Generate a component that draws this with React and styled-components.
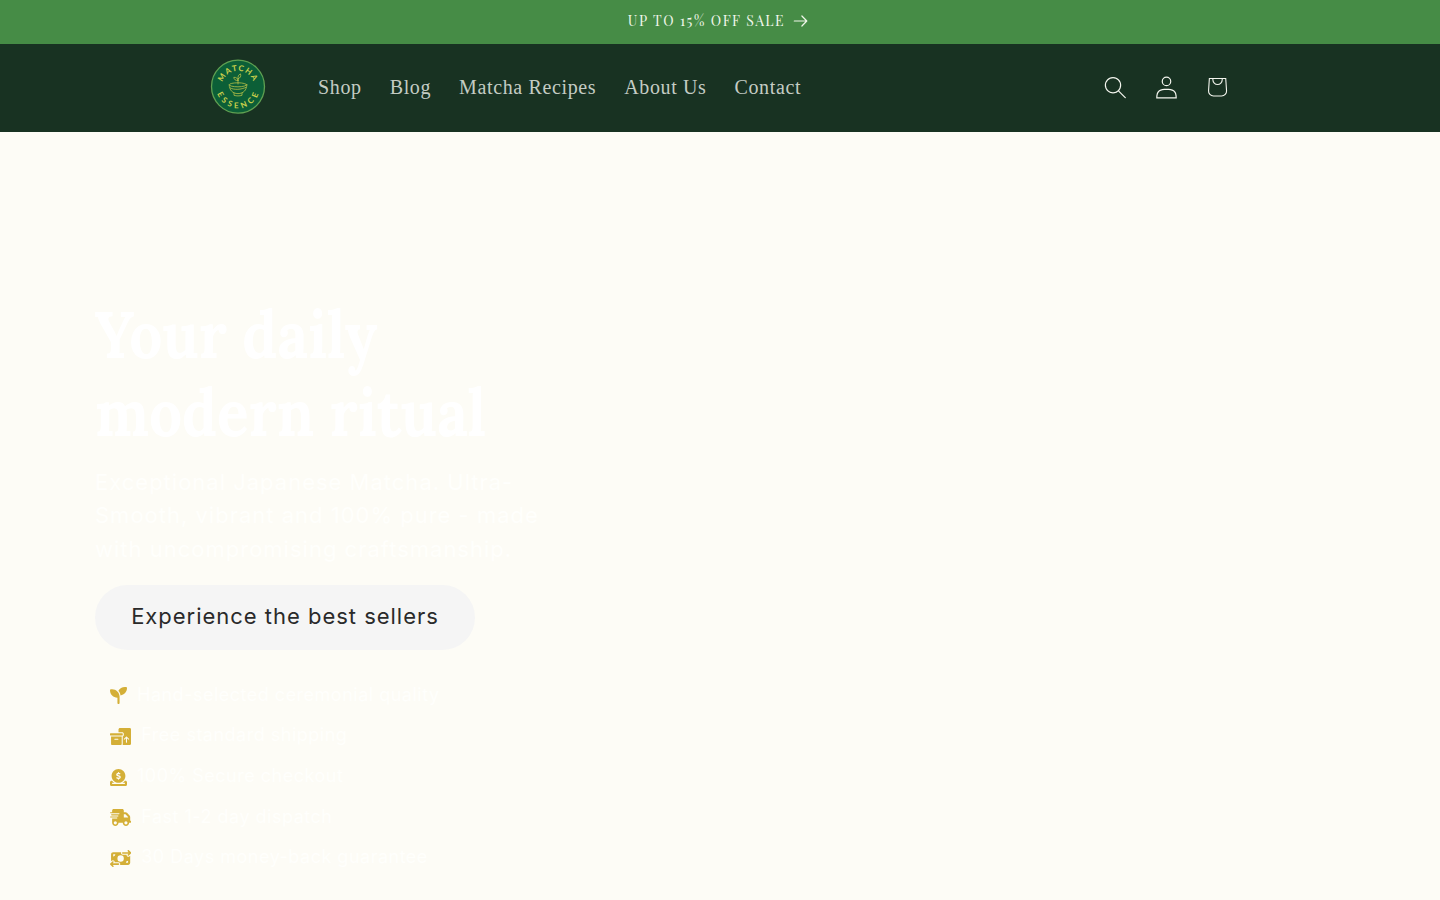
import React from 'react';
import styled, { createGlobalStyle } from 'styled-components';
import { FaSeedling, FaBoxesPacking, FaCircleDollarToSlot, FaTruckFast, FaMoneyBillTransfer } from 'react-icons/fa6';

const GlobalStyle = createGlobalStyle`
  *, *::before, *::after {
    box-sizing: border-box;
  }

  body {
    margin: 0;
    background: #fdfcf6;
    font-family: Inter, "Liberation Sans", sans-serif;
    overflow: hidden;
  }
`;

const Page = styled.div`
  height: 900px;
  overflow: hidden;
`;

const AnnouncementBar = styled.a`
  height: 44px;
  display: flex;
  align-items: center;
  justify-content: center;
  gap: 8px;
  padding-right: 4px;
  padding-bottom: 3px;
  background: #468c46;
  color: #f0f6ea;
  font-family: "Playfair Display", "Liberation Serif", serif;
  font-size: 14px;
  letter-spacing: 1.52px;
  text-decoration: none;
  white-space: nowrap;
`;

const HeaderBar = styled.header`
  height: 88px;
  background: #183222;
`;

const HeaderInner = styled.div`
  width: 1029px;
  height: 100%;
  margin-left: 210px;
  padding-bottom: 2px;
  display: flex;
  align-items: center;
`;

const LogoLink = styled.a`
  display: flex;
  width: 56px;
  height: 56px;
  margin-right: 38px;
`;

const Nav = styled.nav`
  display: flex;
  flex: 1;
`;

const NavLink = styled.a`
  padding: 12px 14px;
  color: #c4ccc4;
  font-family: "Liberation Serif", serif;
  font-size: 20px;
  line-height: 24px;
  letter-spacing: 0.63px;
  text-decoration: none;
  white-space: nowrap;
`;

const HeaderIcons = styled.div`
  display: flex;
  gap: 7px;
`;

const IconButton = styled.button`
  width: 44px;
  height: 44px;
  padding: 0;
  display: flex;
  align-items: center;
  justify-content: center;
  border: none;
  background: none;
  color: #f3f5ee;
  cursor: pointer;

  svg {
    flex: none;
  }
`;

const Hero = styled.section`
  padding: 164px 95px 0;
`;

const HeroTitle = styled.h1`
  width: max-content;
  margin: 0;
  color: #ffffff;
  font-family: Lora, "Noto Serif", "Liberation Serif", serif;
  font-size: 65px;
  font-weight: 700;
  line-height: 78px;
  white-space: nowrap;
  transform: scaleX(0.902);
  transform-origin: left;
`;

const HeroText = styled.p`
  margin: 14px 0 18.8px;
  color: #fffffc;
  font-size: 22px;
  line-height: 33.4px;
  letter-spacing: 1px;
  white-space: nowrap;
`;

const HeroButton = styled.a`
  width: 380px;
  height: 65px;
  display: flex;
  align-items: center;
  justify-content: center;
  padding-bottom: 3px;
  border-radius: 33px;
  background: #f5f5f5;
  color: #2a2a2a;
  font-size: 22px;
  letter-spacing: 0.98px;
  text-decoration: none;
  white-space: nowrap;
`;

const PerkList = styled.ul`
  margin: 24px 0 0;
  padding: 0 0 0 15px;
  list-style: none;
`;

const Perk = styled.li`
  height: 40.6px;
  display: flex;
  align-items: center;
  gap: 10px;
  color: #fffffc;
  font-size: 18px;
  letter-spacing: 0.5px;
  white-space: nowrap;

  svg {
    flex: none;
    width: ${({ $iconWidth }) => $iconWidth}px;
    height: 17px;
    margin-top: 3px;
    color: #d4af37;
  }
`;

const navItems = ['Shop', 'Blog', 'Matcha Recipes', 'About Us', 'Contact'];

const perks = [
  { icon: FaSeedling, iconWidth: 17, label: 'Hand-selected ceremonial quality' },
  { icon: FaBoxesPacking, iconWidth: 21.25, label: 'Free standard shipping' },
  { icon: FaCircleDollarToSlot, iconWidth: 17, label: '100% Secure checkout' },
  { icon: FaTruckFast, iconWidth: 21.25, label: 'Fast 1-2 day dispatch' },
  { icon: FaMoneyBillTransfer, iconWidth: 21.25, label: '30 Days money-back guarantee' },
];

const ArrowIcon = () => (
  <svg width="15" height="12" viewBox="0 0 15 12" fill="none" stroke="currentColor" strokeWidth="1.2" strokeLinecap="round" strokeLinejoin="round">
    <path d="M1.3 6h12.5M8.9 1l4.9 5-4.9 5" />
  </svg>
);

const SearchIcon = () => (
  <svg width="23" height="23" viewBox="0 0 18 19" fill="currentColor">
    <path
      fillRule="evenodd"
      d="M11.03 11.68A5.784 5.784 0 112.85 3.5a5.784 5.784 0 018.18 8.18zm.26 1.12a6.78 6.78 0 11.72-.7l5.4 5.4a.5.5 0 11-.71.7l-5.41-5.4z"
    />
  </svg>
);

const AccountIcon = () => (
  <svg width="23" height="23" viewBox="0 0 18 19" fill="currentColor">
    <path
      fillRule="evenodd"
      d="M6 4.5a3 3 0 116 0 3 3 0 01-6 0zm3-4a4 4 0 100 8 4 4 0 000-8zm5.58 12.15c1.12.82 1.83 2.24 1.91 4.85H1.51c.08-2.6.79-4.03 1.9-4.85C4.66 11.75 6.5 11.5 9 11.5s4.35.26 5.58 1.15zM9 10.5c-2.5 0-4.65.24-6.17 1.35C1.27 12.98.5 14.93.5 18v.5h17V18c0-3.07-.77-5.02-2.33-6.15-1.52-1.1-3.67-1.35-6.17-1.35z"
    />
  </svg>
);

const CartIcon = () => (
  <svg width="44" height="44" viewBox="0 0 40 40" fill="currentColor">
    <path
      fillRule="evenodd"
      d="M15.75 11.8h-3.16l-.77 11.6a5 5 0 004.99 5.34h7.38a5 5 0 004.99-5.33L28.4 11.8zm0 1h-2.22l-.71 10.67a4 4 0 003.99 4.27h7.38a4 4 0 004-4.27l-.72-10.67h-2.22v.63a4.75 4.75 0 11-9.5 0zm8.5 0h-7.5v.63a3.75 3.75 0 107.5 0z"
    />
  </svg>
);

const Logo = () => (
  <svg width="56" height="56" viewBox="0 0 56 56" fill="none">
    <defs>
      <path id="arc-top" d="M11.8 28a16.2 16.2 0 0132.4 0" />
      <path id="arc-bottom" d="M6.2 27.5a21.8 21.8 0 0043.6 0" />
    </defs>
    <circle cx="28" cy="27.6" r="26.5" fill="#0c5f37" stroke="#5fa052" strokeWidth="1.3" />
    <g fill="#c9cf4c" fontFamily="Lato, sans-serif" fontSize="8" fontWeight="700" textAnchor="middle">
      <text letterSpacing="1.1">
        <textPath href="#arc-top" startOffset="50%">MATCHA</textPath>
      </text>
      <text letterSpacing="3.2">
        <textPath href="#arc-bottom" startOffset="52%">ESSENCE</textPath>
      </text>
    </g>
    <g stroke="#b5bf47" strokeWidth="0.8" strokeLinecap="round">
      <ellipse cx="28" cy="25.8" rx="8.8" ry="2" />
      <path d="M19.2 26c.2 5.2 3.4 8.6 8.8 8.6s8.6-3.4 8.8-8.600" />
      <path d="M20.3 29c4 2.2 11 1.6 15.5-.6M24 34v2.3c2.5.8 5.5.8 8 0V34" />
      <path d="M28 25v-5M28 21.5c-2.7.2-4-1-4.2-3.2 2.5-.1 4 .9 4.2 3.2zM28.2 19.8c-.7-2.3.2-4 2.3-4.9.7 2.3-.1 4-2.3 4.9z" />
    </g>
  </svg>
);

const App = () => {
  return (
    <Page>
      <GlobalStyle />
      <AnnouncementBar>
        <span>UP TO 15% OFF SALE</span>
        <ArrowIcon />
      </AnnouncementBar>

      <HeaderBar>
        <HeaderInner>
          <LogoLink aria-label="Matcha Essence">
            <Logo />
          </LogoLink>
          <Nav>
            {navItems.map((item) => (
              <NavLink key={item}>{item}</NavLink>
            ))}
          </Nav>
          <HeaderIcons>
            <IconButton aria-label="Search"><SearchIcon /></IconButton>
            <IconButton aria-label="Log in"><AccountIcon /></IconButton>
            <IconButton aria-label="Cart"><CartIcon /></IconButton>
          </HeaderIcons>
        </HeaderInner>
      </HeaderBar>

      <Hero>
        <HeroTitle>
          Your daily
          <br />
          modern ritual
        </HeroTitle>
        <HeroText>
          Exceptional Japanese Matcha. Ultra-
          <br />
          Smooth, vibrant and 100% pure - made
          <br />
          with uncompromising craftsmanship.
        </HeroText>
        <HeroButton>Experience the best sellers</HeroButton>
        <PerkList>
          {perks.map(({ icon: Icon, iconWidth, label }) => (
            <Perk key={label} $iconWidth={iconWidth}>
              <Icon />
              {label}
            </Perk>
          ))}
        </PerkList>
      </Hero>
    </Page>
  );
};

export default App;
